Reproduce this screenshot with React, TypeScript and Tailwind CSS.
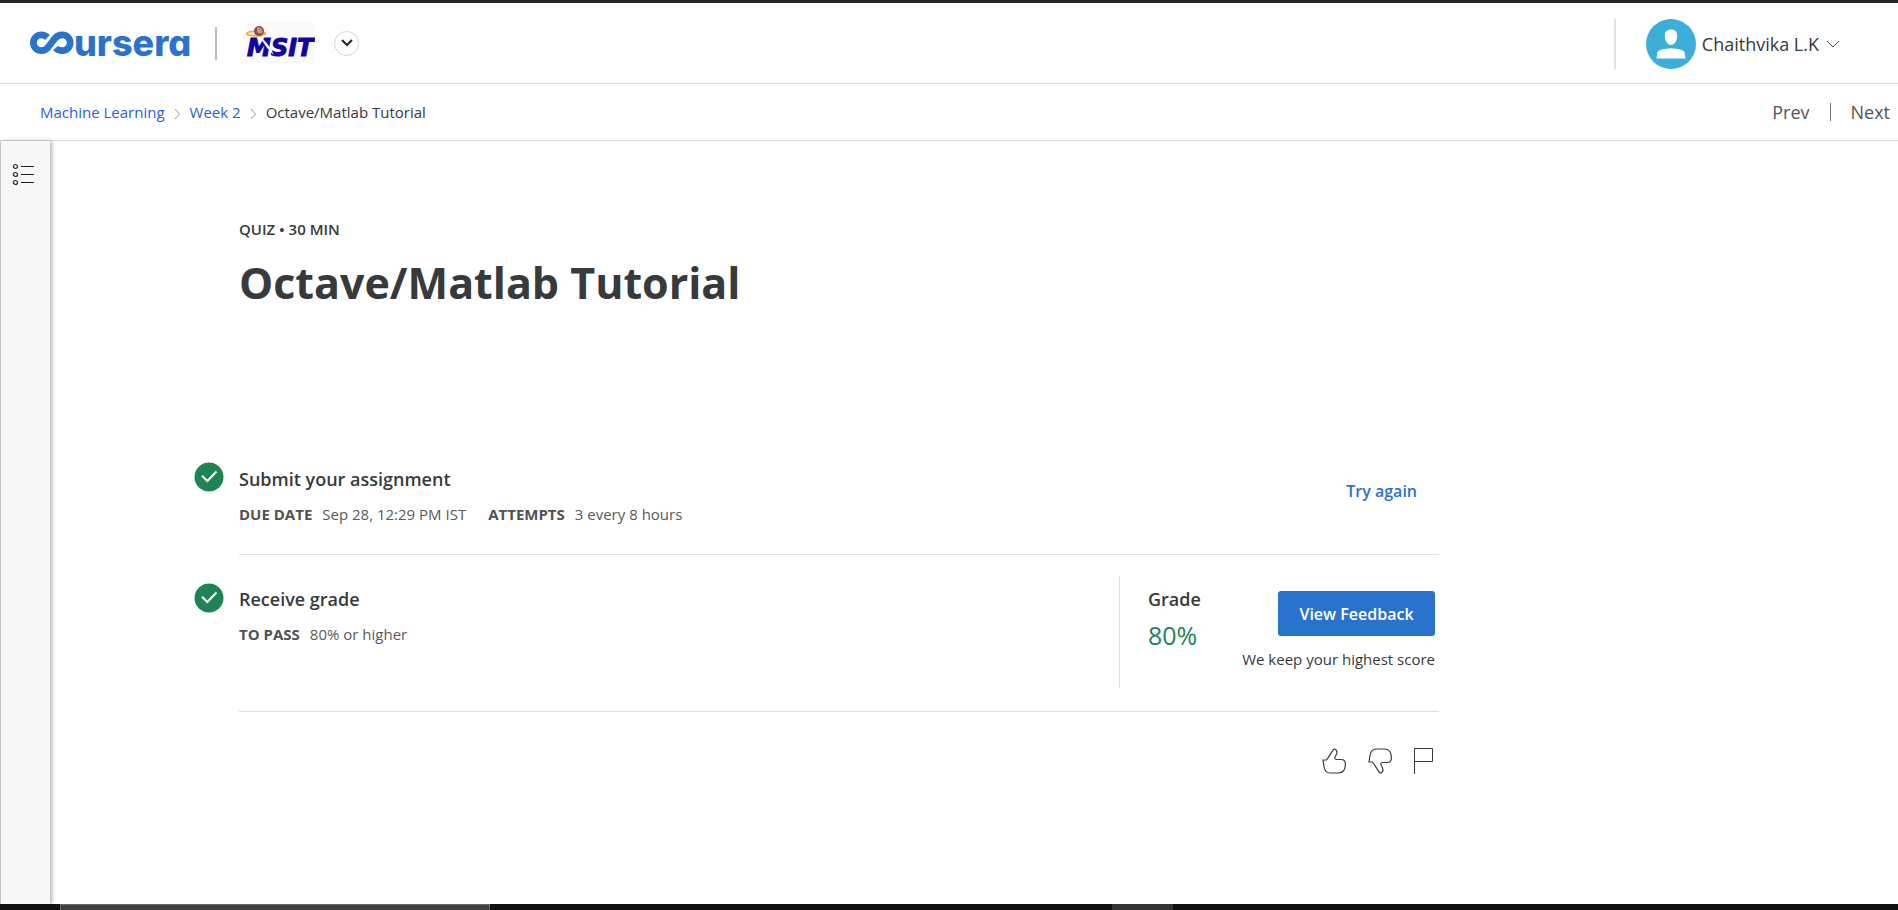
import React from "react";

function CourseraLogo() {
  return (
    <a href="#home" aria-label="Coursera home" className="flex w-[159px] items-center text-[#2a73cc]">
      <svg width="44" height="24" viewBox="0 0 44 24" fill="none" stroke="currentColor" strokeWidth="6.8" className="shrink-0">
        <path d="M17.500 6.500 C15.800 4.800 14 3.900 11.300 3.900 A7.900 7.900 0 0 0 11.300 19.700 C14.500 19.700 16.500 18.500 18.500 15.700 L24.500 7.900 C26.500 5.200 28.800 3.900 32.300 3.900 A7.900 7.900 0 0 1 32.300 19.700 C29.500 19.700 27.300 18.800 25.600 17" />
      </svg>
      <span className="font-['Inter'] text-[36px] leading-6 font-extrabold [font-feature-settings:'cv11']">ursera</span>
    </a>
  );
}

function MsitLogo() {
  return (
    <svg width="70" height="40" viewBox="0 0 70 40" role="img" aria-label="MSIT">
      <rect width="70" height="40" fill="#fafafa" />
      <path d="M1 11 C1 8 6 7 12 7.500 C18 8 22 9 21 11 C19 14 12 14 8 13.500 C4 13 1 13 1 11Z" fill="#f5ac45" />
      <ellipse cx="9" cy="10.500" rx="6" ry="1.500" fill="#fbe3b8" />
      <circle cx="14" cy="8" r="5" fill="#7b4a63" />
      <path d="M12 4 Q17 4 18 9 Q15 12 12 9Z" fill="#dd9450" />
      <text x="2" y="33" fontFamily="DejaVu Sans, sans-serif" fontWeight="700" fontStyle="italic" fontSize="24" fill="#14069c" stroke="#14069c" strokeWidth="1">MSIT</text>
      <path d="M15 14 C19 16 24 22 29 32 C24 28 19 21 15 14Z" fill="#fafafa" />
    </svg>
  );
}

function CheckBadge() {
  return (
    <svg width="30" height="30" viewBox="0 0 30 30" fill="none" className="shrink-0" aria-hidden="true">
      <circle cx="15" cy="15" r="14.500" fill="#1f8354" />
      <path d="M8 13.800 L13.300 19 L22.500 9.500" stroke="#fff" strokeWidth="2" />
    </svg>
  );
}

function Chevron() {
  return (
    <svg width="7" height="12" viewBox="0 0 7 12" fill="none" stroke="#999" aria-hidden="true" className="mt-1">
      <path d="M1 1 L5.500 6 L1 11" />
    </svg>
  );
}

function Detail({ label, value }: { label: string; value: string }) {
  return (
    <div className="flex gap-2.5">
      <dt className="font-bold text-[#525252]">{label}</dt>
      <dd>{value}</dd>
    </div>
  );
}

export default function App() {
  return (
    <div className="flex min-h-screen flex-col bg-white font-['Open_Sans',sans-serif] text-[#373a3c]">
      <div className="h-[3px] bg-[#252525]" />
      <header className="flex h-[81px] items-center justify-between border-b border-[#dcdcdc] pr-[58px] pl-[30px]">
        <div className="flex items-center">
          <CourseraLogo />
          <div className="ml-[26px] h-[33px] w-0.5 bg-[#bdbdbd]" />
          <div className="ml-7">
            <MsitLogo />
          </div>
          <button aria-label="Switch program" className="ml-[19px] flex size-[25px] items-center justify-center rounded-full border border-[#d5d5d5]">
            <svg width="12" height="8" viewBox="0 0 12 8" fill="none" stroke="#222" strokeWidth="2">
              <path d="M1 1 L6 6 L11 1" />
            </svg>
          </button>
        </div>
        <div className="mt-0.5 flex items-center">
          <div className="h-[50px] w-0.5 bg-[#e1e1e1]" />
          <button className="ml-[30px] flex items-center text-lg">
            <svg width="50" height="50" viewBox="0 0 50 50" aria-hidden="true">
              <circle cx="25" cy="25" r="25" fill="#3caeda" />
              <path d="M25 10.500 C29 10.500 31.500 13 31.200 17 C31 22 28.500 26 25 26 C21.500 26 19 22 18.800 17 C18.500 13 21 10.500 25 10.500Z M10.500 39.500 L11.500 33 C12 31.500 16 30.300 20 29.800 Q25 28.800 30 29.800 C34 30.300 38 31.500 38.500 33 L39.500 39.500Z" fill="#fff" />
            </svg>
            <span className="ml-1.5">Chaithvika L.K</span>
            <svg width="14" height="8" viewBox="0 0 14 8" fill="none" stroke="#444" className="ml-[7px]" aria-hidden="true">
              <path d="M1 1 L7 7 L13 1" />
            </svg>
          </button>
        </div>
      </header>
      <div className="flex h-[57px] items-center justify-between border-b border-[#dcdcdc] pr-2 pl-10">
        <nav aria-label="Breadcrumb" className="flex items-center gap-[9px] text-[15px]">
          <a href="#course" className="text-[#1f5fe0]">Machine Learning</a>
          <Chevron />
          <a href="#week" className="text-[#1f5fe0]">Week 2</a>
          <Chevron />
          <span>Octave/Matlab Tutorial</span>
        </nav>
        <nav aria-label="Lesson" className="flex items-center text-lg text-[#555]">
          <a href="#prev">Prev</a>
          <div className="mx-5 h-[18px] w-px bg-[#777]" />
          <a href="#next">Next</a>
        </nav>
      </div>
      <div className="flex flex-1">
        <aside className="w-[50px] shrink-0 border-l border-[#c8c8c8] bg-[#f7f7f7] pt-[22px] pl-[11px] shadow-[2px_0_4px_rgba(0,0,0,0.3)]">
          <button aria-label="Open course outline" className="block">
            <svg width="22" height="23" viewBox="0 0 22 23" fill="none" stroke="#222" strokeWidth="1.200">
              <circle cx="3.500" cy="3.500" r="2" />
              <circle cx="3.500" cy="11.500" r="2" />
              <circle cx="3.500" cy="19.500" r="2" />
              <path d="M9 3.500H22M9 11.500H22M9 19.500H22" />
            </svg>
          </button>
        </aside>
        <main className="ml-36 w-full max-w-[1245px] pt-[76px]">
          <div className="pl-[45px]">
            <p className="text-[15px] leading-6 font-semibold">QUIZ • 30 MIN</p>
            <h1 className="mt-2 text-[43px] leading-[68px] font-bold">Octave/Matlab Tutorial</h1>
          </div>

          <section className="mt-[145px] flex gap-[15px]">
            <CheckBadge />
            <div className="flex h-[93px] flex-1 justify-between border-b border-[#dfdfdf]">
              <div className="pt-[3px]">
                <h2 className="text-lg leading-7 font-semibold">Submit your assignment</h2>
                <dl className="mt-[9px] flex gap-[22px] text-[15px] leading-6 text-[#5a5a5a]">
                  <Detail label="DUE DATE" value="Sep 28, 12:29 PM IST" />
                  <Detail label="ATTEMPTS" value="3 every 8 hours" />
                </dl>
              </div>
              <button className="mt-[15px] mr-[22px] h-7 text-base font-semibold text-[#2a73cc]">Try again</button>
            </div>
          </section>

          <section className="mt-[21px] flex gap-[15px]">
            <div className="pt-[7px]">
              <CheckBadge />
            </div>
            <div className="flex h-[136px] flex-1 justify-between border-b border-[#dfdfdf]">
              <div className="pt-[9px]">
                <h2 className="text-lg leading-7 font-semibold">Receive grade</h2>
                <dl className="mt-[9px] text-[15px] leading-6 text-[#5a5a5a]">
                  <Detail label="TO PASS" value="80% or higher" />
                </dl>
              </div>
              <div className="flex h-28 w-80 justify-between border-l border-[#dfdfdf] pr-1 pl-7">
                <div className="pt-[9px]">
                  <h2 className="text-lg leading-7 font-semibold">Grade</h2>
                  <p className="mt-1 text-[25px] leading-9 text-[#1f8354]">80%</p>
                </div>
                <div className="flex flex-col items-end pt-[15px]">
                  <button className="h-[45px] w-[157px] rounded-[3px] bg-[#2a73cc] text-base font-semibold text-white">View Feedback</button>
                  <p className="mt-[11px] text-[15px] leading-6">We keep your highest score</p>
                </div>
              </div>
            </div>
          </section>

          <div className="mt-9 flex justify-end gap-[22px] pr-[5px]">
            <button aria-label="Like">
              <svg width="24" height="26" viewBox="0 0 24 26" fill="none" stroke="#373a3c" strokeWidth="1.200">
                <path d="M1 12 H4.500 C6 10 9 5 11 2.200 Q12.200 .4 13.600 1.500 C15.500 3 15 5.500 13.800 7.500 C12.500 9.500 12.200 11.500 14.500 11.500 H19 Q23.400 11.500 23.400 16 Q23.400 25 16.500 25 H8 C3.500 25 2.500 21.500 2 18.500Z" />
              </svg>
            </button>
            <button aria-label="Dislike">
              <svg width="24" height="26" viewBox="0 0 24 26" fill="none" stroke="#373a3c" strokeWidth="1.200">
                <path d="M1 14 H4.500 C6 16 9 21 11 23.800 Q12.200 25.600 13.600 24.500 C15.500 23 15 20.500 13.800 18.500 C12.500 16.500 12.200 14.500 14.500 14.500 H19 Q23.400 14.500 23.400 10 Q23.400 1 16.500 1 H8 C3.500 1 2.500 4.500 2 7.500Z" />
              </svg>
            </button>
            <button aria-label="Report an issue">
              <svg width="20" height="26" viewBox="0 0 20 26" fill="none" stroke="#373a3c">
                <path d="M.5 26 V.5 H18.500 V13.500 H.5" />
              </svg>
            </button>
          </div>
        </main>
      </div>
      <footer className="flex h-[6px] bg-[#101010]">
        <div className="ml-[60px] w-[430px] border-x border-t border-[#6a6a6a] bg-[#404040]" />
        <div className="ml-[622px] w-[61px] bg-[#333]" />
      </footer>
    </div>
  );
}
